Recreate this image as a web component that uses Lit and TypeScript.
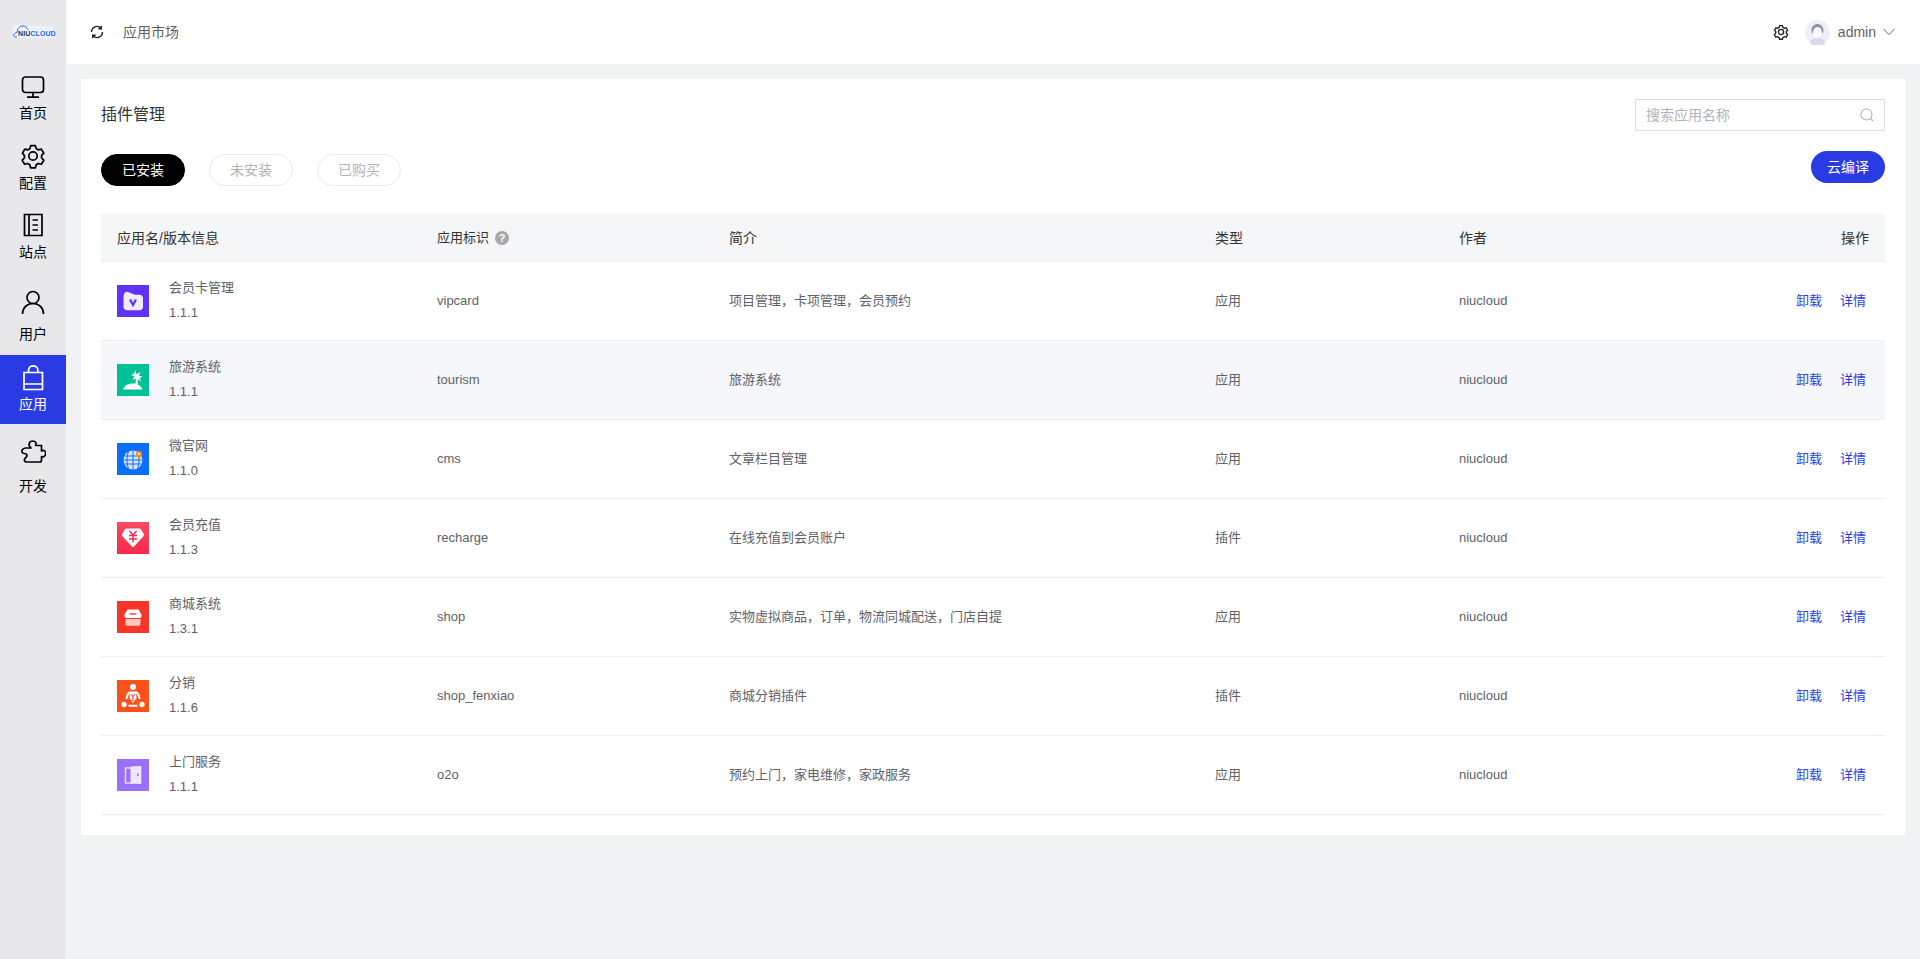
import { LitElement, html, css, svg } from "lit";
import { customElement } from "lit/decorators.js";

const nav = [
  { label: "首页", h: 71, p: 10, g: 3, icon: svg`<rect x="2.500" y="3" width="21" height="15.500" rx="3"/><path d="M13 18.500v4.500M7 23.200h12"/>` },
  { label: "配置", h: 69, p: 8, g: 4, icon: svg`<path d="M10.600 2.600h4.800l.8 3 2.200 1.300 3-.8 2.400 4.100-2.200 2.200v2.600l2.200 2.200-2.400 4.100-3-.8-2.200 1.300-.8 3h-4.800l-.8-3-2.200-1.300-3 .8-2.400-4.100 2.200-2.200v-2.600L2.400 10.200l2.400-4.100 3 .8L10 5.600z" stroke-linejoin="round"/><circle cx="13" cy="13" r="4.200"/>` },
  { label: "站点", h: 69, p: 8, g: 4, icon: svg`<path d="M4.500 2.500h17.500v21H4.500zM9 2.500v21M12.500 8H18M12.500 13H18M12.500 18H18"/>` },
  { label: "用户", h: 82, p: 16, g: 9, icon: svg`<circle cx="13" cy="8.500" r="6"/><path d="M2.500 25c0-6.500 4.500-10.500 10.500-10.500s10.500 4 10.500 10.500"/>` },
  { label: "应用", h: 69, p: 10, g: 3, active: true, icon: svg`<path d="M4 7.500h18.500v17H4zM8.500 7.500V5.500a4.700 4.700 0 0 1 9.400 0v2M4 19h18.500"/>` },
  { label: "开发", h: 82, p: 15, g: 11, icon: svg`<path d="M9.500 3.500c1.500-2 5-2 6.200 0 .6 1.100.3 2.200-.2 3h6v5.500c1-.8 2.300-1 3.300 0 1.500 1.500.9 4.700-1 5.700-.8.400-1.600.3-2.300-.1v3.700c0 1-.7 1.700-1.700 1.700H6.500c-2 0-2.800-2.300-1.500-3.700 1-1.100 2-1.500 2-2.800 0-1.500-1.500-2-3-2-2 0-2.700-2.500-1.500-4 1-1.200 1.500-1.500 3.500-1.500h5c-1-1.500-2-2-2-3 0-.4.100-.9.500-1.500z" stroke-linejoin="round"/>` },
];

const appIcons = {
  vip: svg`<rect width="32" height="32" fill="#5e33f6"/><path d="M6.500 13c0-4 1.500-7 4-6.200l7.500 3h4.500c2 0 3.500 1.300 3.500 3.200v9c0 2-1.500 3.200-3.500 3.200H10c-2 0-3.500-1.200-3.500-3.200z" fill="#f1ecff"/><path d="M13 14.500l3 5.500 3-5.500" fill="none" stroke="#5e33f6" stroke-width="2.200"/>`,
  tour: svg`<rect width="32" height="32" fill="#00c096"/><path d="M6 25.500c1.500-4 5-6 10-6 4 0 8 2 9.500 6z" fill="#fff"/><path d="M18.500 6l1 4.500 3.500-2.500-1 3.800 3.500 1-3 1.500 2 3.500-4-2.800.7 6.500h-3l.8-7-3.500 1.500 2-3.500-3.500-1.500 3.500-1L14 7l3 3z" fill="#fff"/>`,
  cms: svg`<rect width="32" height="32" fill="#0a6dfb"/><circle cx="16" cy="17" r="9.500" fill="#d7e6ff"/><path d="M6.500 17h19M7.500 13h17M7.500 21h17M16 7.500v19M11.500 8.500c-2 5-2 12 0 17M20.500 8.500c2 5 2 12 0 17" stroke="#0a6dfb" fill="none" stroke-width="1"/><path d="M22 16c-2-2.500-3-3.500-3-5a3 3 0 0 1 6 0c0 1.500-1 2.500-3 5z" fill="#ff8a1e"/><circle cx="22" cy="11" r="1" fill="#fff"/>`,
  charge: svg`<defs><linearGradient id="g1" x1="0" y1="0" x2="0" y2="1"><stop offset="0" stop-color="#fb4a62"/><stop offset="1" stop-color="#f62a4a"/></linearGradient></defs><rect width="32" height="32" fill="url(#g1)"/><path d="M9.500 6.500h13c.8 0 1.200.3 1.600.9l2.800 4.700c.4.700.3 1.400-.2 2L17 24.500c-.6.700-1.500.7-2 0L5.300 14.100c-.5-.6-.6-1.300-.2-2l2.800-4.700c.4-.6.800-.9 1.600-.9z" fill="#fff"/><path d="M12.500 9L16 13l3.500-4M12 13.500h8M12 17h8M16 13v7.500" fill="none" stroke="#f62a4a" stroke-width="1.400"/>`,
  shop: svg`<rect width="32" height="32" fill="#f93429"/><path d="M10.500 8.500h11l3 5v1.800c0 1-.8 1.700-1.700 1.700H9.200c-1 0-1.700-.7-1.700-1.700v-1.800z" fill="#fff"/><path d="M12.500 13h7" stroke="#f93429" stroke-width="1.300"/><path d="M8.500 18h15v5c0 1-.7 1.700-1.700 1.700H10.200c-1 0-1.700-.7-1.700-1.700z" fill="#fcc8c3"/>`,
  fx: svg`<rect width="32" height="32" fill="#fd511c"/><circle cx="16" cy="7" r="3" fill="#fff"/><circle cx="7" cy="24.500" r="2.700" fill="#fff"/><circle cx="25" cy="24.500" r="2.700" fill="#fff"/><path d="M9.500 19c.3-3.500 1.500-6 4-7M22.500 19c-.3-3.500-1.500-6-4-7M11.500 25.800h9" fill="none" stroke="#fff" stroke-width="2"/><path d="M13 11.500h6l.5 6.500L16 23l-3.500-5z" fill="#fff"/><path d="M14 14l2 2.500 2-2.500M16 16.500V21" fill="none" stroke="#fd511c" stroke-width="1.200"/>`,
  door: svg`<rect width="32" height="32" fill="#9a70fa"/><path d="M8.500 9h8v15h-8z" fill="#9a70fa" stroke="#e6dcff" stroke-width="1.500"/><path d="M13.500 7.500l10-.5c.5 0 .8.300.8.800v16.500c0 .5-.3.700-.8.700l-10-.5z" fill="#eee7ff"/><rect x="20" y="14.500" width="1.600" height="2.400" fill="#9a70fa"/>`,
};

const rows = [
  ["vip", "会员卡管理", "1.1.1", "vipcard", "项目管理，卡项管理，会员预约", "应用"],
  ["tour", "旅游系统", "1.1.1", "tourism", "旅游系统", "应用"],
  ["cms", "微官网", "1.1.0", "cms", "文章栏目管理", "应用"],
  ["charge", "会员充值", "1.1.3", "recharge", "在线充值到会员账户", "插件"],
  ["shop", "商城系统", "1.3.1", "shop", "实物虚拟商品，订单，物流同城配送，门店自提", "应用"],
  ["fx", "分销", "1.1.6", "shop_fenxiao", "商城分销插件", "插件"],
  ["door", "上门服务", "1.1.1", "o2o", "预约上门，家电维修，家政服务", "应用"],
];

@customElement("app-root")
export class AppRoot extends LitElement {
  static styles = css`
    :host { display: flex; width: 100%; height: 959px; background: #f0f2f4; color: #333; line-height: 20px;
      font-family: "Liberation Sans", "Noto Sans CJK SC", sans-serif; font-size: 14px; overflow: hidden; }
    .side { width: 66px; flex: none; background: #e8e8ea; display: flex; flex-direction: column; }
    .logo { height: 64px; display: flex; align-items: center; justify-content: center; }
    .logo-inner { position: relative; width: 40px; height: 12px; display: flex; align-items: center; background: #eef3ff; font-size: 7px; line-height: 8px; font-weight: 700; color: #1a66ff; }
    .logo-inner svg { position: absolute; left: 0; top: -1px; }
    .logo-inner span { margin-left: 5px; margin-top: 3px; letter-spacing: .1px; white-space: nowrap; position: relative; }
    .logo-inner b { color: #333; font-weight: 700; }
    .nav { box-sizing: border-box; display: flex; flex-direction: column; align-items: center; color: #000; font-size: 14px; line-height: 20px; }
    .nav svg { display: block; width: 26px; height: 26px; fill: none; stroke: currentColor; stroke-width: 1.700; }
    .nav.active { background: #2b3be4; color: #fff; }
    .main { flex: 1; min-width: 0; display: flex; flex-direction: column; }
    .top { height: 64px; flex: none; background: #fff; display: flex; align-items: center; padding: 0 25px 0 24px; font-size: 14px; color: #606266; }
    .top .refresh { width: 14px; height: 14px; margin-right: 19px; fill: none; stroke: #222; stroke-width: 1.400; }
    .spacer { flex: 1; }
    .gear { width: 16px; height: 16px; fill: none; stroke: #222; margin-right: 16px; }
    .avatar { width: 25px; height: 25px; margin-right: 8px; }
    .chev { width: 12px; height: 12px; margin-left: 7px; fill: none; stroke: #606266; stroke-width: 1; }
    .card { margin: 15px 15px 0; background: #fff; padding: 20px; }
    .head { display: flex; justify-content: space-between; align-items: flex-start; }
    .title { font-size: 16px; line-height: 24px; color: #333; margin-top: 4px; }
    .search { width: 250px; height: 32px; box-sizing: border-box; border: 1px solid #dcdfe6; display: flex; align-items: center; padding: 0 10px; color: #b1b3b8; font-size: 14px; }
    .search svg { width: 14px; height: 14px; margin-left: auto; fill: none; stroke: #b1b3b8; stroke-width: 1.100; }
    .tabs { display: flex; align-items: flex-start; justify-content: space-between; margin-top: 23px; height: 32px; }
    .pills { display: flex; gap: 24px; }
    .pill { width: 84px; height: 32px; box-sizing: border-box; border: 1px solid #e9e9eb; border-radius: 16px; display: flex; align-items: center; justify-content: center; color: #b4b4b4; font-size: 14px; }
    .pill.on { background: #000; border-color: #000; color: #fff; }
    .cloud { width: 74px; height: 32px; margin-top: -3px; border-radius: 16px; background: #2b3be4; color: #fff; display: flex; align-items: center; justify-content: center; font-size: 14px; }
    .row { display: grid; grid-template-columns: 320px 292px 486px 244px 200px 1fr; height: 79px; align-items: center; border-bottom: 1px solid #ebeef5; box-sizing: border-box; color: #606266; font-size: 13px; }
    .row.hd { height: 48px; margin-top: 28px; background: #f5f6f8; color: #333; font-size: 14px; }
    .row.hl { background: #f5f7fa; }
    .cell { padding: 0 16px; white-space: nowrap; }
    .app { display: flex; align-items: center; }
    .app svg { width: 32px; height: 32px; flex: none; margin-right: 20px; }
    .info { line-height: 24px; }
    .name { line-height: 22px; margin-bottom: 2px; }
    .idt { font-size: 13px; display: flex; align-items: center; gap: 6px; }
    .q { display: block; width: 14px; height: 14px; border-radius: 50%; background: #a8a8a8; color: #fff; font-size: 11px; font-weight: 700; line-height: 14px; text-align: center; }
    .ops { text-align: right; color: #2b3be4; padding-right: 19px; }
    .ops span + span { margin-left: 18px; }
    .hd .ops { color: #333; padding-right: 16px; }
  `;

  render() {
    return html`
      <aside class="side">
        <div class="logo"><div class="logo-inner">
          <svg width="20" height="13" viewBox="0 0 20 13" fill="none" stroke="#1a66ff" stroke-width="1"><path d="M4 12H2.500C1 12 .5 10.500 1 9.500 1.500 8 3 7.500 4 7.500 4 3.500 7 1 10 1c2.500 0 4.500 2 5 4"/></svg>
          <span><b>NIU</b>CLOUD</span></div></div>
        ${nav.map((n) => html`<div class="nav ${n.active ? "active" : ""}" style="height:${n.h}px;padding-top:${n.p}px;gap:${n.g}px"><svg viewBox="0 0 26 26">${n.icon}</svg><span>${n.label}</span></div>`)}
      </aside>
      <div class="main">
        <header class="top">
          <svg class="refresh" viewBox="0 0 14 14"><path d="M1.500 7a5.500 5.500 0 0 1 9.500-3.800M12.500 7A5.500 5.500 0 0 1 3 10.800M11.300 .8v3h-3M2.700 13.200v-3h3"/></svg>
          <span>应用市场</span>
          <span class="spacer"></span>
          <svg class="gear" viewBox="0 0 26 26" stroke-width="2.200"><path d="M10.600 2.600h4.800l.8 3 2.200 1.300 3-.8 2.400 4.100-2.200 2.200v2.600l2.200 2.200-2.400 4.100-3-.8-2.200 1.300-.8 3h-4.800l-.8-3-2.200-1.300-3 .8-2.400-4.100 2.200-2.200v-2.600L2.400 10.200l2.400-4.100 3 .8L10 5.600z"/><circle cx="13" cy="13" r="4.200"/></svg>
          <svg class="avatar" viewBox="0 0 25 25"><circle cx="12.500" cy="12.500" r="12.500" fill="#eef0f6"/><path d="M6.500 11c0-5 3-7 6-7s6 2 6 7l-1 3c-1-3-1-5-5-5s-4 2-5 5z" fill="#8d93ad"/><path d="M4.500 23c1-4 4-5 8-5s7 1 8 5a12.500 12.500 0 0 1-16 0z" fill="#d9dce8"/><ellipse cx="12.500" cy="12.500" rx="4.300" ry="5.500" fill="#fafafd"/></svg>
          <span>admin</span>
          <svg class="chev" viewBox="0 0 12 12"><path d="M.5 3L6 8.500 11.500 3"/></svg>
        </header>
        <section class="card">
          <div class="head">
            <div class="title">插件管理</div>
            <div class="search"><span>搜索应用名称</span><svg viewBox="0 0 14 14"><circle cx="6.500" cy="6.500" r="5.500"/><path d="M10.500 10.500l2.500 2.500"/></svg></div>
          </div>
          <div class="tabs">
            <div class="pills"><div class="pill on">已安装</div><div class="pill">未安装</div><div class="pill">已购买</div></div>
            <div class="cloud">云编译</div>
          </div>
          <div class="row hd">
            <div class="cell">应用名/版本信息</div>
            <div class="cell idt"><span>应用标识</span><span class="q">?</span></div>
            <div class="cell">简介</div><div class="cell">类型</div><div class="cell">作者</div>
            <div class="cell ops">操作</div>
          </div>
          ${rows.map((r, i) => html`<div class="row ${i === 1 ? "hl" : ""}">
            <div class="cell app"><svg viewBox="0 0 32 32">${(appIcons as any)[r[0]]}</svg><div class="info"><div class="name">${r[1]}</div><div>${r[2]}</div></div></div>
            <div class="cell">${r[3]}</div><div class="cell">${r[4]}</div><div class="cell">${r[5]}</div><div class="cell">niucloud</div>
            <div class="cell ops"><span>卸载</span><span>详情</span></div>
          </div>`)}
        </section>
      </div>`;
  }
}
